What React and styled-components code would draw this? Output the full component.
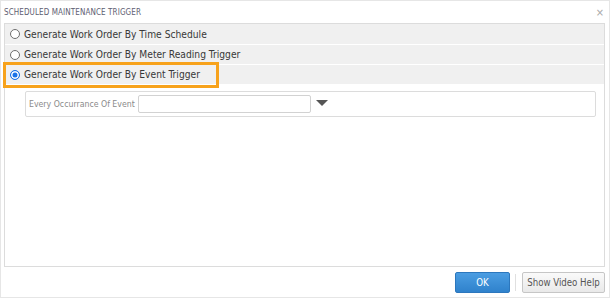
import styled, { createGlobalStyle } from "styled-components";

const GlobalStyle = createGlobalStyle`
  html, body {
    margin: 0;
    padding: 0;
    background: #ffffff;
  }
  * {
    box-sizing: border-box;
  }
`;

const Dialog = styled.div`
  width: 610px;
  height: 298px;
  border: 1px solid #e6e6e6;
  display: flex;
  flex-direction: column;
  font-family: "DejaVu Sans Condensed", "DejaVu Sans", "Liberation Sans", sans-serif;
  font-stretch: condensed;
  background: #fff;
`;

const Header = styled.div`
  height: 22px;
  display: flex;
  align-items: center;
  justify-content: space-between;
  padding: 1px 5px 0 3px;
`;

const Title = styled.span`
  font-size: 8px;
  color: #5e6072;
  letter-spacing: 0.1px;
`;

const Close = styled.span`
  font-size: 11px;
  color: #a8a8a8;
  line-height: 1;
  margin-top: -1px;
`;

const Panel = styled.div`
  flex: 1;
  margin: 0 4px 0 3px;
  border: 1px solid #dcdcdc;
  display: flex;
  flex-direction: column;
`;

const Row = styled.label`
  position: relative;
  height: 20px;
  background: #f0f0f0;
  border-top: ${(p) => (p.first ? "none" : "1px solid #ffffff")};
  display: flex;
  align-items: center;
  padding-left: 5px;
  gap: 4px;
  font-size: 10.2px;
  color: #383838;
`;

const Radio = styled.span`
  width: 10px;
  height: 10px;
  border-radius: 50%;
  border: 1px solid ${(p) => (p.checked ? "#1a73e8" : "#6e6e6e")};
  background: ${(p) => (p.checked ? "#1a73e8" : "#fff")};
  box-shadow: ${(p) => (p.checked ? "inset 0 0 0 1.5px #fff" : "none")};
  flex-shrink: 0;
`;

const Highlight = styled.span`
  position: absolute;
  left: -2px;
  top: -3px;
  width: 216px;
  height: 26px;
  border: 3px solid #f7a21b;
  pointer-events: none;
`;

const SubPanel = styled.div`
  margin: 7px 8px 0 20px;
  height: 26px;
  border: 1px solid #dcdcdc;
  border-radius: 2px;
  display: flex;
  align-items: center;
  padding-left: 3px;
  gap: 3px;
`;

const FieldLabel = styled.span`
  font-size: 8.7px;
  color: #8a8a8a;
`;

const TextBox = styled.div`
  width: 173px;
  height: 18px;
  border: 1px solid #d2d2d2;
  border-radius: 2px;
  background: #fff;
`;

const Caret = styled.span`
  width: 0;
  height: 0;
  border-left: 6px solid transparent;
  border-right: 6px solid transparent;
  border-top: 6px solid #555;
  margin-left: 2px;
  margin-top: -2px;
`;

const Footer = styled.div`
  height: 30px;
  display: flex;
  justify-content: flex-end;
  align-items: flex-start;
  padding: 5px 4px 0 0;
`;

const Button = styled.button`
  height: 21px;
  width: ${(p) => p.width}px;
  border-radius: 2px;
  font-family: inherit;
  font-size: 9.6px;
  padding: 0;
  cursor: pointer;
  border: 1px solid ${(p) => (p.primary ? "#2c77bd" : "#c6c6c6")};
  color: ${(p) => (p.primary ? "#ffffff" : "#555555")};
  background: ${(p) =>
    p.primary
      ? "linear-gradient(#4b9de2, #2f82cc)"
      : "linear-gradient(#fafafa, #e9e9e9)"};
`;

const Divider = styled.span`
  width: 1px;
  height: 17px;
  margin: 2px 6px 0 5px;
  background: #e0e0e0;
`;

const options = [
  "Generate Work Order By Time Schedule",
  "Generate Work Order By Meter Reading Trigger",
  "Generate Work Order By Event Trigger",
];

export default function App() {
  const selected = 2;

  return (
    <>
      <GlobalStyle />
      <Dialog>
        <Header>
          <Title>SCHEDULED MAINTENANCE TRIGGER</Title>
          <Close>×</Close>
        </Header>
        <Panel>
          {options.map((text, i) => (
            <Row key={text} first={i === 0}>
              <Radio checked={i === selected} />
              {text}
              {i === selected && <Highlight />}
            </Row>
          ))}
          <SubPanel>
            <FieldLabel>Every Occurrance Of Event</FieldLabel>
            <TextBox />
            <Caret />
          </SubPanel>
        </Panel>
        <Footer>
          <Button primary width={55}>OK</Button>
          <Divider />
          <Button width={83}>Show Video Help</Button>
        </Footer>
      </Dialog>
    </>
  );
}
